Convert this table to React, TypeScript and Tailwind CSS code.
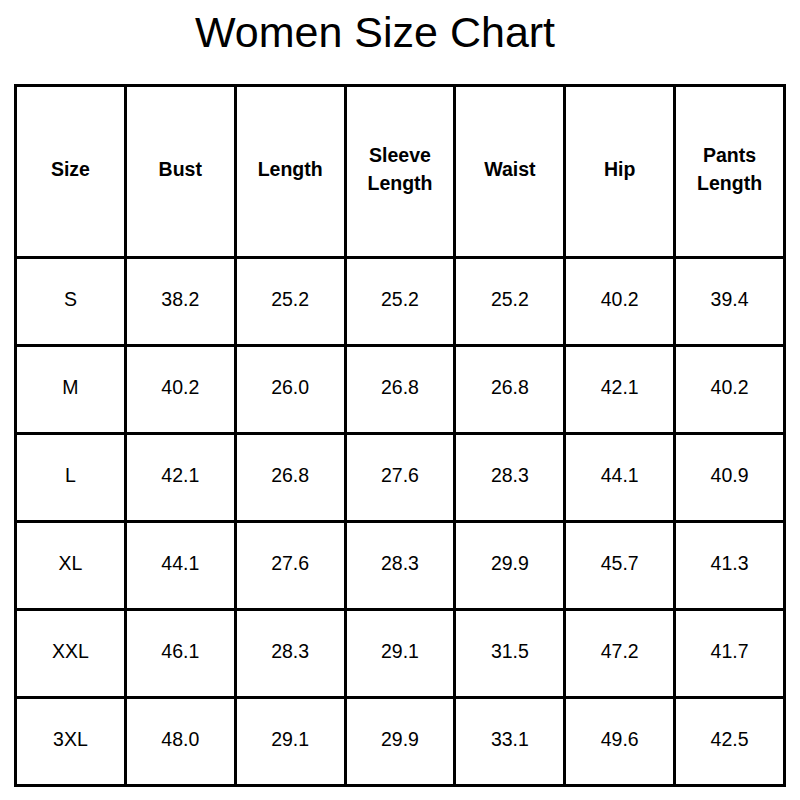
const headers = ['Size', 'Bust', 'Length', 'Sleeve Length', 'Waist', 'Hip', 'Pants Length'];

const rows = [
  ['S', '38.2', '25.2', '25.2', '25.2', '40.2', '39.4'],
  ['M', '40.2', '26.0', '26.8', '26.8', '42.1', '40.2'],
  ['L', '42.1', '26.8', '27.6', '28.3', '44.1', '40.9'],
  ['XL', '44.1', '27.6', '28.3', '29.9', '45.7', '41.3'],
  ['XXL', '46.1', '28.3', '29.1', '31.5', '47.2', '41.7'],
  ['3XL', '48.0', '29.1', '29.9', '33.1', '49.6', '42.5'],
];

export default function App() {
  return (
    <div className="w-[800px] h-[800px] bg-white text-black font-['Liberation_Sans',Arial,sans-serif]">
      <div className="h-[84px] pt-[8px] pl-[195px]">
        <h1 className="text-[43px] leading-[48px]">Women Size Chart</h1>
      </div>

      <div className="ml-[14px] w-[772px] bg-black p-[3px] grid grid-cols-7 gap-[3px]">
        {headers.map((h) => (
          <div
            key={h}
            className="bg-white h-[169px] pb-[5px] flex items-center justify-center text-center px-1 text-[19.5px] leading-[28px] font-bold"
          >
            {h.includes(' ') ? (
              <span>
                {h.split(' ')[0]}
                <br />
                {h.split(' ')[1]}
              </span>
            ) : (
              h
            )}
          </div>
        ))}
        {rows.map((row) =>
          row.map((cell, i) => (
            <div
              key={row[0] + i}
              className="bg-white h-[85px] pb-[4px] flex items-center justify-center text-[19.5px]"
            >
              {cell}
            </div>
          ))
        )}
      </div>
    </div>
  );
}
